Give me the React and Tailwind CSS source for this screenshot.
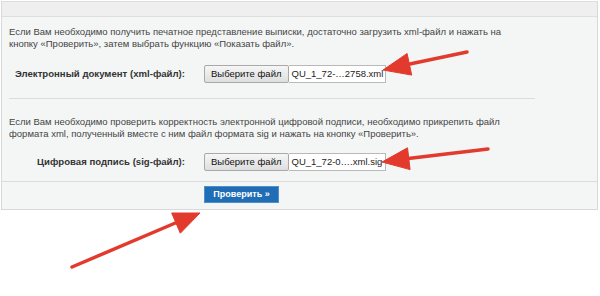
import React from "react";

function FileInput({ name }) {
  return (
    <div className="flex h-[18px] items-stretch">
      <div className="flex items-center rounded-[2px] border border-[#a9a9a9] bg-gradient-to-b from-[#f6f6f6] to-[#dedede] px-[6px] text-[9.5px] text-[#111]">
        Выберите файл
      </div>
      <div className="flex w-[97px] items-center border border-l-0 border-[#b9b9b9] bg-white pl-[3px] text-[9.5px] text-[#222]">
        {name}
      </div>
    </div>
  );
}

function Arrows() {
  const arrows = [
    { tail: [467, 52], line: [405, 65], head: "383,70 411.7,75.1 407.1,53.5" },
    { tail: [488, 149], line: [404, 159], head: "382,162 410.1,169.6 407.5,147.8" },
    { tail: [72, 267], line: [180, 221], head: "200,213 180.3,233.2 171.7,213" }
  ];
  return (
    <svg className="pointer-events-none absolute left-0 top-0" width="600" height="296">
      {arrows.map((a, i) => (
        <g key={i} fill="#e23b2e" stroke="#e23b2e">
          <line
            x1={a.tail[0]}
            y1={a.tail[1]}
            x2={a.line[0]}
            y2={a.line[1]}
            strokeWidth="3.5"
            strokeLinecap="round"
          />
          <polygon points={a.head} strokeWidth="1" strokeLinejoin="round" />
        </g>
      ))}
    </svg>
  );
}

export default function App() {
  return (
    <div className="relative h-[296px] w-[600px] overflow-hidden bg-white font-['Liberation_Sans',Arial,sans-serif]">
      <div className="ml-px mt-px w-[597px] border-x border-b border-[#d9d9d9] bg-[#f4f6f5]">
        <div className="h-[16px] border-y border-[#dedede] bg-[#efefef]" />

        <div className="px-[7px]">
          <p className="mt-[9px] w-[505px] text-[9.5px] leading-[12px] text-[#444]">
            Если Вам необходимо получить печатное представление выписки, достаточно загрузить xml-файл и нажать на кнопку «Проверить», затем выбрать функцию «Показать файл».
          </p>
          <div className="mt-[15px] flex items-center">
            <div className="w-[176px] whitespace-nowrap text-right text-[9.6px] font-bold text-[#333]">
              Электронный документ (xml-файл):
            </div>
            <div className="ml-[19px]">
              <FileInput name="QU_1_72-…2758.xml" />
            </div>
          </div>
          <div className="mt-[15px] w-[526px] border-t border-[#dcdcdc]" />

          <p className="mt-[17px] w-[505px] text-[9.5px] leading-[12px] text-[#444]">
            Если Вам необходимо проверить корректность электронной цифровой подписи, необходимо прикрепить файл формата xml, полученный вместе с ним файл формата sig и нажать на кнопку «Проверить».
          </p>
          <div className="mt-[13px] flex items-center">
            <div className="w-[176px] whitespace-nowrap text-right text-[9.6px] font-bold text-[#333]">
              Цифровая подпись (sig-файл):
            </div>
            <div className="ml-[19px]">
              <FileInput name="QU_1_72-0….xml.sig" />
            </div>
          </div>
        </div>

        <div className="mt-[10px] border-t border-[#dcdcdc]" />

        <div className="pb-[6px] pl-[202px] pt-[4px]">
          <button className="flex h-[17px] w-[75px] items-center justify-center border border-[#4f8fcc] bg-[#1f6db5] text-[9px] font-bold text-white">
            Проверить »
          </button>
        </div>
      </div>
      <Arrows />
    </div>
  );
}
